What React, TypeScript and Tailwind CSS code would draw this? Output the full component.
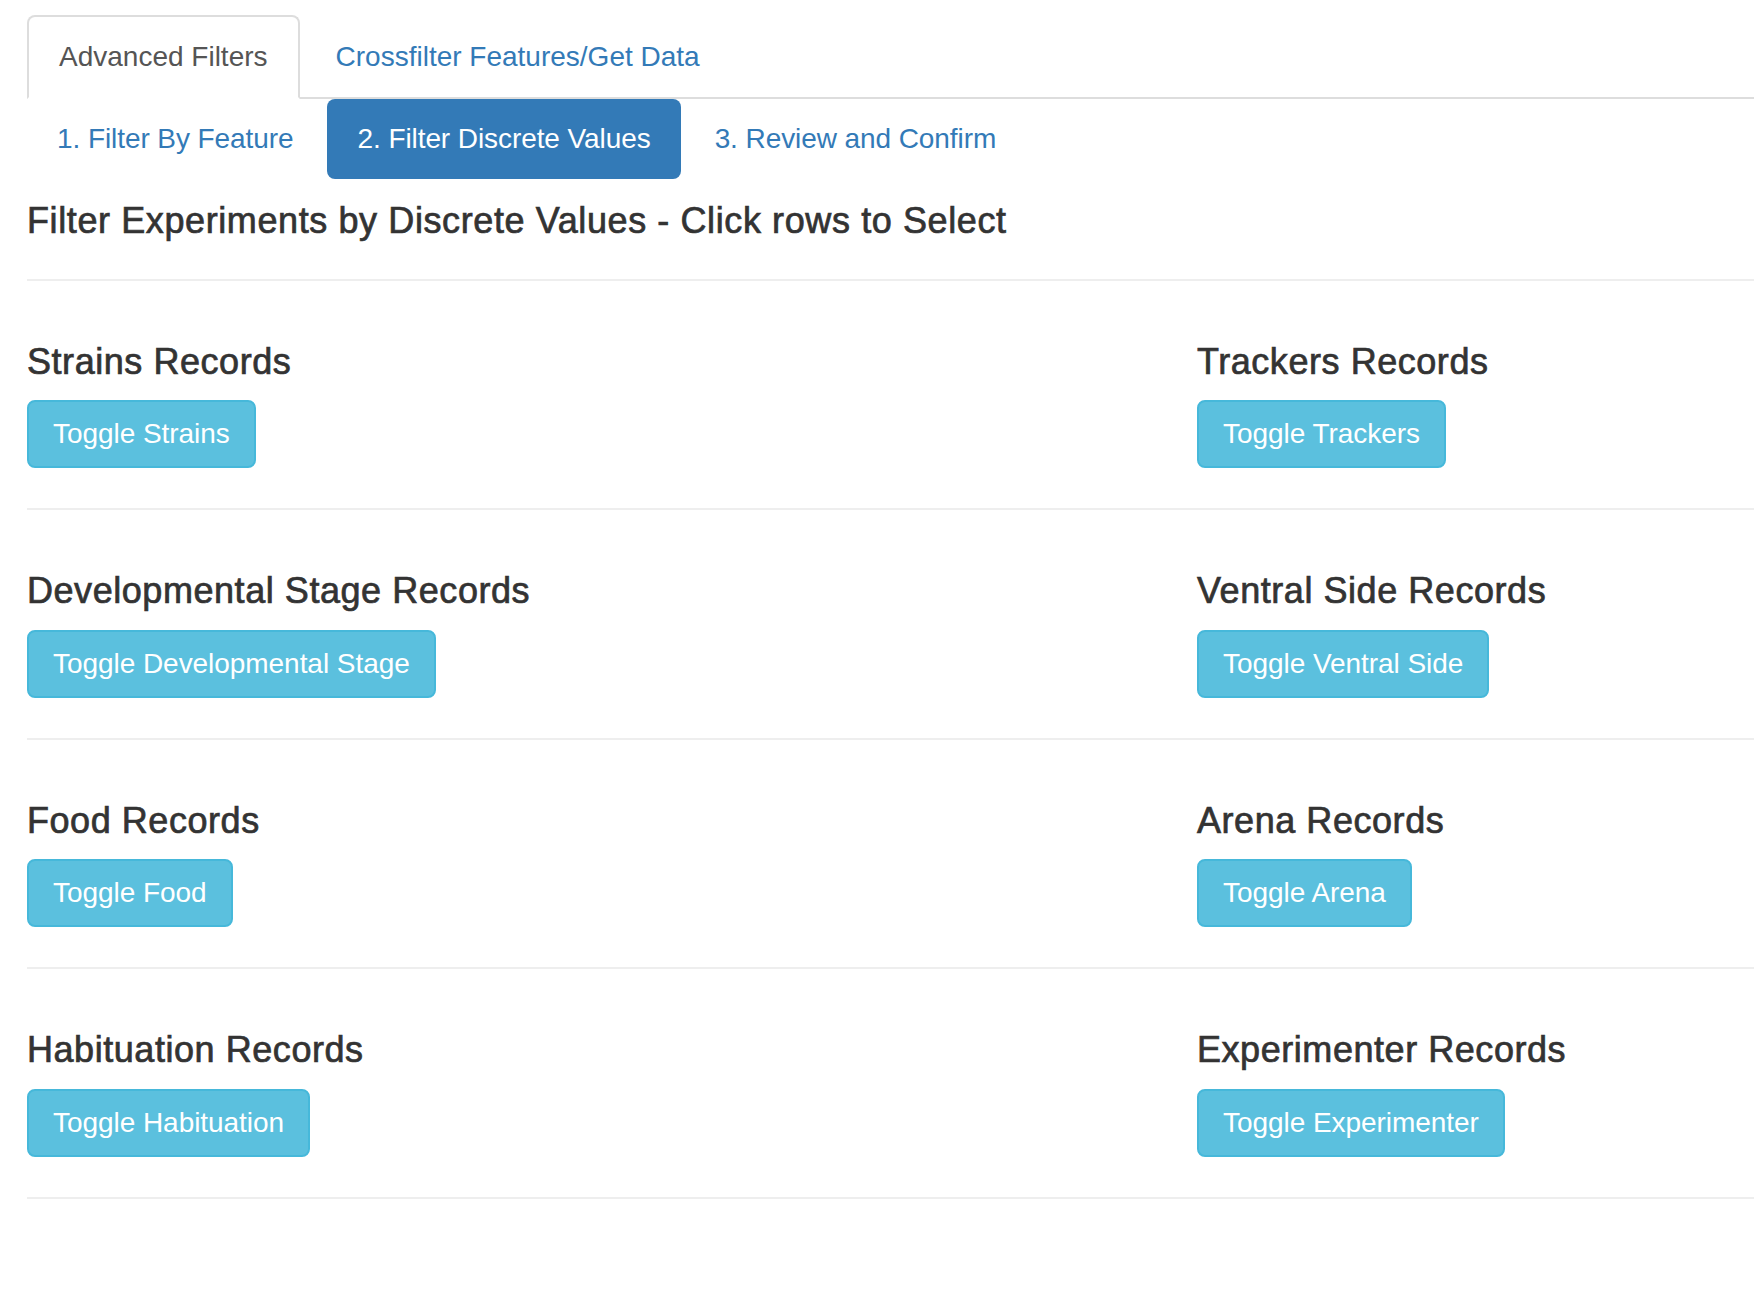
import React from "react";

const rows: [string, string][][] = [
  [
    ["Strains Records", "Toggle Strains"],
    ["Trackers Records", "Toggle Trackers"],
  ],
  [
    ["Developmental Stage Records", "Toggle Developmental Stage"],
    ["Ventral Side Records", "Toggle Ventral Side"],
  ],
  [
    ["Food Records", "Toggle Food"],
    ["Arena Records", "Toggle Arena"],
  ],
  [
    ["Habituation Records", "Toggle Habituation"],
    ["Experimenter Records", "Toggle Experimenter"],
  ],
];

function Section({ title, button }: { title: string; button: string }) {
  return (
    <div>
      <h4 className="mt-[21px] mb-[19px] text-[36px] leading-[39.6px] text-[#333] tracking-[0.55px] [-webkit-text-stroke:0.7px_#333]">
        {title}
      </h4>
      <button
        type="button"
        className="inline-block px-[24px] py-[12px] border-2 border-[#46b8da] bg-[#5bc0de] text-white rounded-[8px] text-[28px] leading-[40px] tracking-[-0.05px]"
      >
        {button}
      </button>
    </div>
  );
}

export default function App() {
  return (
    <div className="min-h-screen w-full overflow-hidden bg-white font-['Liberation_Sans',Arial,sans-serif] text-[28px] leading-[40px] text-[#333]">
      <div className="pl-[27px] pt-[15px]">
        <ul className="flex border-b-2 border-[#ddd]">
          <li className="-mb-[2px] mr-[4px]">
            <a className="block px-[30px] py-[20px] border-2 border-[#ddd] border-b-white rounded-t-[8px] bg-white text-[#555]">
              Advanced Filters
            </a>
          </li>
          <li className="-mb-[2px] mr-[4px]">
            <a className="block px-[30px] py-[20px] border-2 border-transparent text-[#337ab7]">
              Crossfilter Features/Get Data
            </a>
          </li>
        </ul>
        <ul className="flex tracking-[-0.08px]">
          <li>
            <a className="block px-[30px] py-[20px] rounded-[8px] text-[#337ab7]">1. Filter By Feature</a>
          </li>
          <li className="ml-[4px]">
            <a className="block px-[30px] py-[20px] rounded-[8px] bg-[#337ab7] text-white">2. Filter Discrete Values</a>
          </li>
          <li className="ml-[4px]">
            <a className="block px-[30px] py-[20px] rounded-[8px] text-[#337ab7]">3. Review and Confirm</a>
          </li>
        </ul>
        <h4 className="mt-[22px] text-[36px] leading-[39.6px] text-[#333] tracking-[0.6px] [-webkit-text-stroke:0.7px_#333]">
          Filter Experiments by Discrete Values - Click rows to Select
        </h4>
        <hr className="mt-[38px] mb-[40px] border-0 border-t-2 border-[#eee]" />
        {rows.map((row, i) => (
          <div key={i}>
            <div className="grid grid-cols-[1170px_1fr]">
              {row.map(([t, b]) => (
                <Section key={t} title={t} button={b} />
              ))}
            </div>
            <hr className="mt-[40px] mb-[40px] border-0 border-t-2 border-[#eee]" />
          </div>
        ))}
      </div>
    </div>
  );
}
